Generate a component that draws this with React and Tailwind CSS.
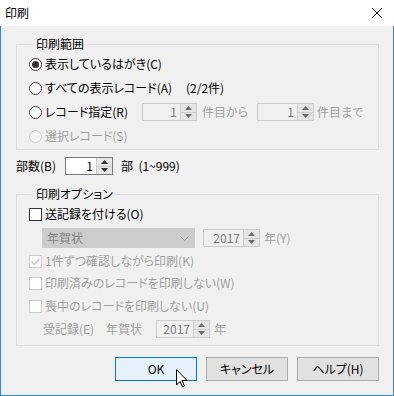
import React from 'react'

const Radio = ({ checked, disabled, label, labelClass = '', children }) => (
  <div className="flex h-[24px] items-center">
    <span
      className={`flex h-[13px] w-[13px] shrink-0 items-center justify-center rounded-full border ${
        disabled ? 'border-[#cccccc] bg-[#f4f4f4]' : 'border-[#333333] bg-white'
      }`}
    >
      {checked && <span className="h-[7px] w-[7px] rounded-full bg-[#333333]" />}
    </span>
    <span className={`ml-[3px] block shrink-0 ${labelClass} ${disabled ? 'text-[#a0a0a0]' : 'text-black'}`}>
      {label}
    </span>
    {children}
  </div>
)

const Check = ({ checked, disabled, label, rowClass }) => (
  <div className={`flex items-center ${rowClass}`}>
    <span
      className={`flex h-[13px] w-[13px] shrink-0 items-center justify-center border bg-white ${
        disabled ? 'border-[#cccccc]' : 'border-[#333333]'
      }`}
    >
      {checked && (
        <svg width="11" height="11" viewBox="0 0 11 11">
          <path d="M1.5 5.5 L4.5 8.5 L9.5 2.5" fill="none" stroke="#c6c6c6" strokeWidth="1.3" />
        </svg>
      )}
    </span>
    <span className={`ml-[3px] ${disabled ? 'text-[#a0a0a0]' : 'text-black'}`}>{label}</span>
  </div>
)

const Spin = ({ value, disabled, className }) => (
  <div
    className={`flex h-[18px] shrink-0 border ${
      disabled ? 'border-[#cccccc] bg-[#f0f0f0] text-[#7a7a7a]' : 'border-[#7a7a7a] bg-white text-black'
    } ${className}`}
  >
    <div className="flex-1 pr-[3px] text-right leading-[16px]">{value}</div>
    <div className="flex w-[16px] flex-col border-l border-[#cccccc] bg-[#e6e6e6]">
      <div className="flex flex-1 items-center justify-center border-b border-[#cccccc]">
        <svg width="7" height="4" viewBox="0 0 7 4">
          <path d="M0 4 L3.5 0 L7 4 Z" fill={disabled ? '#6d6d6d' : '#333333'} />
        </svg>
      </div>
      <div className="flex flex-1 items-center justify-center">
        <svg width="7" height="4" viewBox="0 0 7 4">
          <path d="M0 0 L7 0 L3.5 4 Z" fill={disabled ? '#6d6d6d' : '#333333'} />
        </svg>
      </div>
    </div>
  </div>
)

const Group = ({ title, className, children }) => (
  <fieldset className={`mx-0 border border-[#dcdcdc] pl-[12px] ${className}`}>
    <legend className="ml-[5px] px-[2px] leading-[16px] text-black">{title}</legend>
    {children}
  </fieldset>
)

const Btn = ({ label, primary }) => (
  <button
    className={`h-[24px] w-[82px] border leading-[16px] text-black ${
      primary ? 'border-[#0078d7] bg-[#e5f1fb]' : 'border-[#adadad] bg-[#e1e1e1]'
    }`}
  >
    {label}
  </button>
)

export default function App() {
  return (
    <div className="relative h-[396px] w-[394px] whitespace-nowrap font-['Noto_Sans_CJK_JP',sans-serif] text-[12px] leading-[16px] [font-feature-settings:'palt']">
      <div className="flex h-[26px] items-center justify-between bg-white pl-[5px] pr-[11px]">
        <span className="text-black">印刷</span>
        <svg width="12" height="12" viewBox="0 0 12 12">
          <path d="M1 1 L11 11 M11 1 L1 11" stroke="#111111" strokeWidth="1" />
        </svg>
      </div>

      <div className="flex h-[370px] flex-col border-x border-b border-[#2b8be0] bg-[#f0f0f0] pl-[15px] pr-[14px]">
        <Group title="印刷範囲" className="mt-[10px] pb-[1px]">
          <Radio checked label="表示しているはがき(C)" />
          <Radio label="すべての表示レコード(A)" labelClass="w-[141px]">
            <span className="block shrink-0">(2/2件)</span>
          </Radio>
          <Radio label="レコード指定(R)" labelClass="w-[97px]">
            <Spin value="1" disabled className="w-[55px]" />
            <span className="ml-[5px] block w-[55px] shrink-0 text-[#a0a0a0]">件目から</span>
            <Spin value="1" disabled className="w-[57px]" />
            <span className="ml-[3px] text-[#a0a0a0]">件目まで</span>
          </Radio>
          <Radio disabled label="選択レコード(S)" />
        </Group>

        <div className="mt-[4px] flex h-[24px] items-center">
          <span className="w-[49px]">部数(B)</span>
          <Spin value="1" className="w-[48px]" />
          <span className="ml-[8px]">部&nbsp;&nbsp;(1~999)</span>
        </div>

        <Group title="印刷オプション" className="mt-[8px] pb-[5px]">
          <Check label="送記録を付ける(O)" rowClass="h-[24px]" />
          <div className="flex h-[24px] items-center">
            <div className="ml-[13px] flex h-[20px] w-[153px] items-center justify-between border border-[#cccccc] bg-[#cccccc] pl-[4px] pr-[5px] text-[#838383]">
              <span>年賀状</span>
              <svg width="9" height="5" viewBox="0 0 9 5">
                <path d="M0.5 0.5 L4.5 4.5 L8.5 0.5" fill="none" stroke="#9a9a9a" strokeWidth="1" />
              </svg>
            </div>
            <Spin value="2017" disabled className="ml-[8px] w-[57px]" />
            <span className="ml-[4px] text-[#a0a0a0]">年(Y)</span>
          </div>
          <Check checked disabled label="1件ずつ確認しながら印刷(K)" rowClass="h-[22px]" />
          <Check disabled label="印刷済みのレコードを印刷しない(W)" rowClass="h-[22px]" />
          <Check disabled label="喪中のレコードを印刷しない(U)" rowClass="h-[24px]" />
          <div className="flex h-[22px] items-center pl-[14px] text-[#a0a0a0]">
            <span className="block w-[63px] shrink-0">受記録(E)</span>
            <span className="block w-[50px] shrink-0">年賀状</span>
            <Spin value="2017" disabled className="w-[54px]" />
            <span className="ml-[4px]">年</span>
          </div>
        </Group>

        <div className="mt-[11px] flex justify-end gap-[9px]">
          <Btn label="OK" primary />
          <Btn label="キャンセル" />
          <Btn label="ヘルプ(H)" />
        </div>
      </div>

      <svg className="absolute left-[176px] top-[369px]" width="12" height="19" viewBox="0 0 12 19">
        <path
          d="M0.5 0.5 L0.5 16 L4 12.5 L6.5 18 L8.5 17 L6 11.5 L11 11.5 Z"
          fill="#ffffff"
          stroke="#000000"
          strokeWidth="1"
          strokeLinejoin="miter"
        />
      </svg>
    </div>
  )
}
